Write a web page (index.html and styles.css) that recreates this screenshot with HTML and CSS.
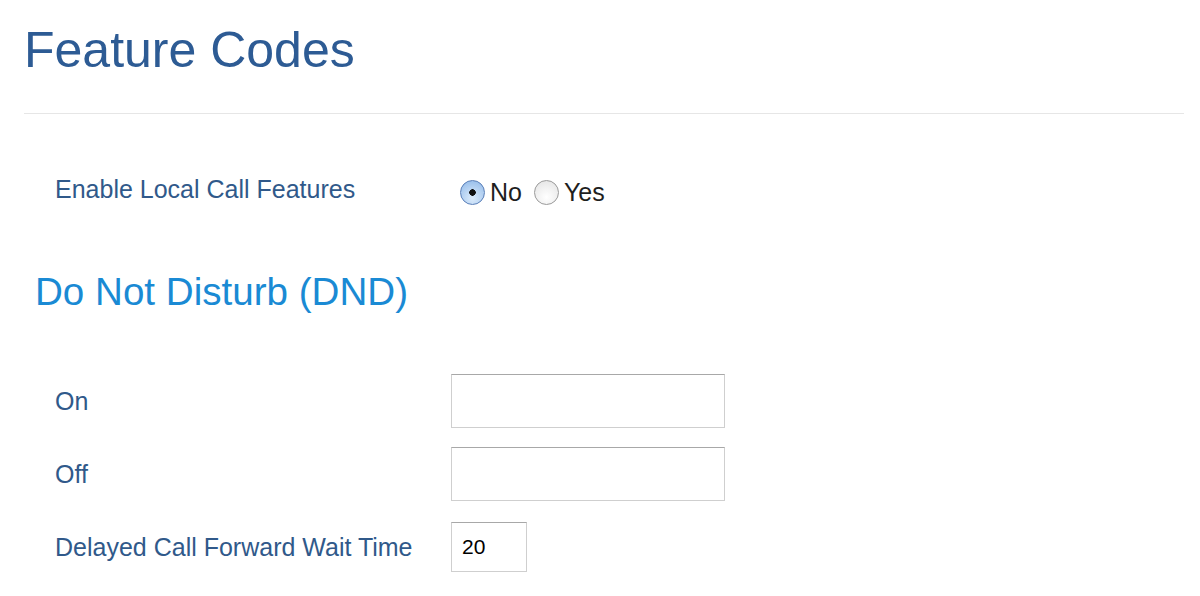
FILE: index.html
```html
<!DOCTYPE html>
<html lang="en">
<head>
  <meta charset="UTF-8" />
  <title>Feature Codes</title>
  <link rel="stylesheet" href="styles.css">
</head>
<body>

  <div class="page">
    <h1 class="page-title">Feature Codes</h1>
    <hr class="divider" />

    <!-- Local call features -->
    <div class="form-row form-row-radio">
      <label class="field-label">Enable Local Call Features</label>
      <div class="radio-group">
        <label class="radio-option"><input type="radio" name="local" checked /> No</label>
        <label class="radio-option"><input type="radio" name="local" /> Yes</label>
      </div>
    </div>

    <!-- DND -->
    <h2 class="section-title">Do Not Disturb (DND)</h2>

    <div class="form-rows">
      <div class="form-row">
        <label class="field-label">On</label>
        <input class="text-input" type="text" />
      </div>
      <div class="form-row">
        <label class="field-label">Off</label>
        <input class="text-input" type="text" />
      </div>
      <div class="form-row">
        <label class="field-label">Delayed Call Forward Wait Time</label>
        <input class="text-input text-input-short" type="text" value="20" />
      </div>
    </div>
  </div>

</body>
</html>
```

FILE: styles.css
```css
body {
  font-family: "Liberation Sans", Arial, sans-serif;
  background: #ffffff;
  color: #222;
  margin: 0;
  padding: 0;
}

.page {
  padding: 0 16px 0 24px;
}

.page-title {
  font-size: 50px;
  font-weight: normal;
  line-height: 60px;
  color: #2d5b94;
  margin: 20px 0 33px;
}

.divider {
  border: none;
  border-top: 1px solid #e6e6e6;
  margin: 0;
}

.form-row {
  display: flex;
  align-items: center;
  height: 54px;
  padding-left: 31px;
}

.form-row-radio {
  height: 30px;
  margin-top: 60px;
}

.field-label {
  width: 396px;
  flex-shrink: 0;
  font-size: 25px;
  line-height: 30px;
  color: #30598a;
}

.radio-group {
  display: flex;
  align-items: center;
  margin-left: 9px;
  margin-top: 6px;
}

.radio-option {
  display: flex;
  align-items: center;
  font-size: 25px;
  color: #1e1e1e;
  margin-right: 12px;
}

.radio-option input {
  appearance: none;
  -webkit-appearance: none;
  width: 25px;
  height: 25px;
  margin: 0 5px 0 0;
  border-radius: 50%;
  border: 1px solid #9a9a9a;
  background: radial-gradient(circle at 50% 70%, #ffffff, #e2e2e2);
  box-sizing: border-box;
}

.radio-option input:checked {
  border-color: #5a7fb8;
  background:
    radial-gradient(circle, #111 0 3px, transparent 3.5px),
    radial-gradient(circle at 50% 75%, #dcecfc, #8fb8e8);
}

.section-title {
  font-size: 38.6px;
  font-weight: normal;
  line-height: 46px;
  color: #1a8ad4;
  margin: 65px 0 59px 11px;
}

.form-rows {
  display: flex;
  flex-direction: column;
  gap: 19px;
}

.text-input {
  width: 274px;
  height: 54px;
  box-sizing: border-box;
  border: 1px solid #cfcfcf;
  border-top-color: #a8a8a8;
  padding: 0 10px;
  font-family: "Liberation Sans", Arial, sans-serif;
  font-size: 21px;
  color: #000;
}

.text-input-short {
  width: 76px;
  height: 50px;
}
```
